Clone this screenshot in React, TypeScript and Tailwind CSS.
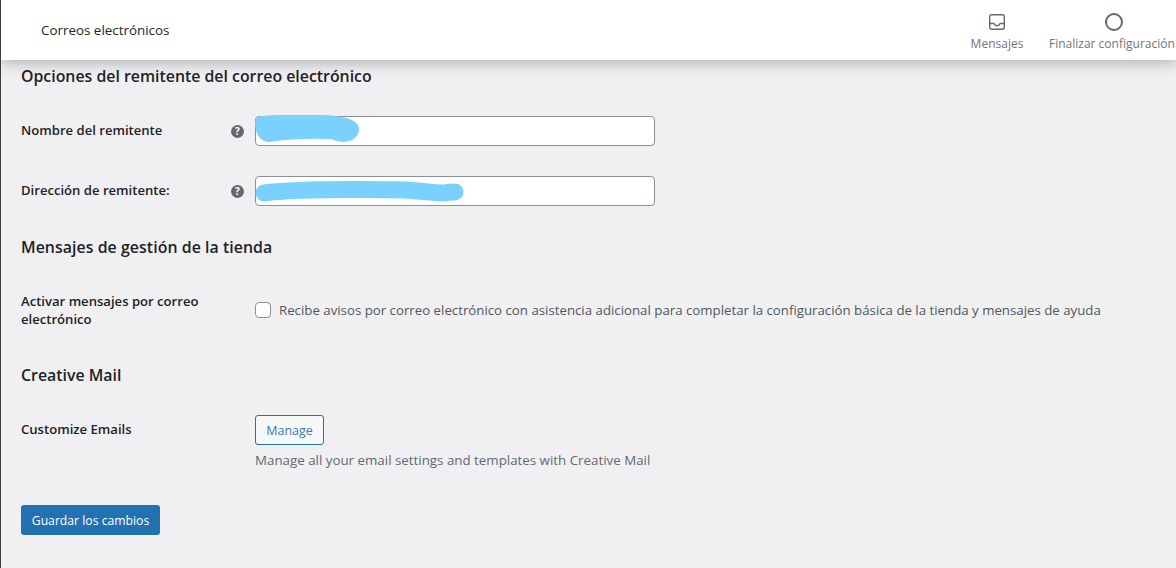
import { ReactNode } from "react";

function HelpIcon() {
  return (
    <div className="w-[13px] h-[13px] rounded-full bg-[#646970] text-white text-[10px] leading-[13px] font-bold text-center">
      ?
    </div>
  );
}

function Scribble({ width, d, thick }: { width: number; d: string; thick: number }) {
  return (
    <svg
      className="absolute left-[-2px] top-[-2px] pointer-events-none"
      width={width}
      height="32"
      viewBox={`0 0 ${width} 32`}
    >
      <path d={d} fill="#7bd1fd" stroke="#7bd1fd" strokeWidth={thick} strokeLinecap="round" strokeLinejoin="round" />
    </svg>
  );
}

function SenderField({ label, children }: { label: string; children: ReactNode }) {
  return (
    <div className="flex items-center h-[30px]">
      <div className="w-[210px] shrink-0 -mt-[2px] font-semibold text-[13.1px] leading-[18px] text-[#1d2327]">{label}</div>
      <HelpIcon />
      <div className="relative ml-[11px] w-[400px] h-[30px] bg-white border border-[#8c8f94] rounded-[4px]">
        {children}
      </div>
    </div>
  );
}

function Heading({ className, children }: { className: string; children: ReactNode }) {
  return <h2 className={`text-[15.86px] leading-[20px] font-semibold text-[#1d2327] ${className}`}>{children}</h2>;
}

export default function App() {
  return (
    <div
      className="w-[1176px] h-[568px] overflow-hidden bg-[#f0f0f2] border-l border-[#3c3c3c] flex flex-col"
      style={{ fontFamily: '"Open Sans", "Noto Sans", sans-serif' }}
    >
      <header className="h-[60px] shrink-0 bg-white flex items-center justify-between shadow-[0_2px_14px_rgba(0,0,0,0.3)] relative z-10">
        <h1 className="ml-[40px] pt-[1px] text-[13.4px] text-[#1d2327]">Correos electrónicos</h1>
        <div className="flex text-[12px] text-[#757575] whitespace-nowrap h-full mr-[1px]">
          <div className="w-[54px] flex flex-col items-center pt-[13px]">
            <svg width="18" height="18" viewBox="0 0 18 18" fill="none" stroke="#646970" strokeWidth="1.4">
              <rect x="1.7" y="1.7" width="14.6" height="14.6" rx="2" />
              <path d="M1.7 10.5h4.2c.6 1.5 1.7 2.2 3.1 2.2s2.5-.7 3.1-2.2h4.2" />
            </svg>
            <span className="mt-[4px]">Mensajes</span>
          </div>
          <div className="w-[127px] ml-[25px] -mr-[1px] flex flex-col items-start pt-[13px]">
            <div className="ml-[56px] w-[18px] h-[18px] rounded-full border-2 border-[#646970]" />
            <span className="mt-[4px]">Finalizar configuración</span>
          </div>
        </div>
      </header>

      <main className="pl-[20px]">
        <Heading className="mt-[6px]">Opciones del remitente del correo electrónico</Heading>

        <div className="mt-[30px] flex flex-col gap-[30px]">
          <SenderField label="Nombre del remitente">
            <Scribble
              width={108}
              thick={14}
              d="M8 8C30 6 60 5 80 8 90 9 97 11 98 14 98 18 94 20 90 20 84 20 82 18 78 17 55 16 35 17 14 20 10 19 8 14 8 8Z"
            />
          </SenderField>
          <SenderField label="Dirección de remitente:">
            <Scribble
              width={214}
              thick={17}
              d="M10 18C40 14 90 14 150 15 170 16 180 18 190 18 195 17 198 17 201 17"
            />
          </SenderField>
        </div>

        <Heading className="mt-[31px] tracking-[0.06px]">Mensajes de gestión de la tienda</Heading>

        <div className="mt-[35px] flex">
          <div className="w-[234px] shrink-0 pr-5 font-semibold text-[13.1px] leading-[18px] text-[#1d2327]">
            Activar mensajes por correo electrónico
          </div>
          <div className="flex items-center h-[36px] text-[13.26px] text-[#50575e] whitespace-nowrap">
            <div className="w-[16px] h-[16px] bg-white border border-[#8c8f94] rounded-[4px] mr-[8px] shrink-0" />
            <span className="pt-[1px]">
              Recibe avisos por correo electrónico con asistencia adicional para completar la configuración básica de la tienda y mensajes de ayuda
            </span>
          </div>
        </div>

        <Heading className="mt-[37px]">Creative Mail</Heading>

        <div className="mt-[30px] flex">
          <div className="w-[234px] shrink-0 pt-[5px] font-semibold text-[13.1px] leading-[18px] text-[#1d2327]">
            Customize Emails
          </div>
          <div>
            <button className="h-[30px] w-[69px] pt-[2px] border border-[#2271b1] rounded-[3px] bg-[#f6f7f7] text-[12.5px] text-[#3a7cb0]">
              Manage
            </button>
            <p className="mt-[6px] text-[13.34px] leading-[18px] text-[#646970]">
              Manage all your email settings and templates with Creative Mail
            </p>
          </div>
        </div>

        <button className="mt-[36px] h-[30px] w-[139px] pt-[2px] rounded-[3px] bg-[#2271b1] text-white text-[12.2px]">
          Guardar los cambios
        </button>
      </main>
    </div>
  );
}
